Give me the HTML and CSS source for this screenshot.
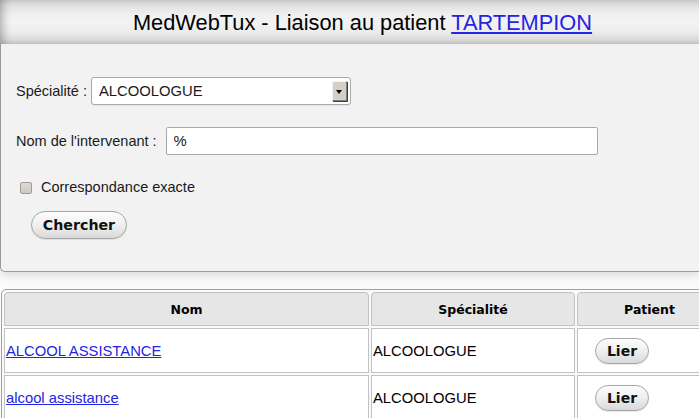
FILE: index.html
```html
<!DOCTYPE html>
<html lang="fr">
<head>
<meta charset="utf-8">
<title>MedWebTux - Liaison au patient</title>
<link rel="stylesheet" href="styles.css">
</head>
<body>
<header class="topbar">
  <h1 class="title">MedWebTux - Liaison au patient <a href="#" class="link">TARTEMPION</a></h1>
</header>
<section class="panel">
  <div class="row row-spec">
    <label class="label" for="spec">Spécialité :</label>
    <div class="select">
      <select id="spec" class="select-native"><option>ALCOOLOGUE</option></select>
      <span class="select-arrow"><span class="tri"></span></span>
    </div>
  </div>
  <div class="row row-nom">
    <label class="label" for="nom">Nom de l'intervenant :</label>
    <input id="nom" class="text-input" type="text" value="%">
  </div>
  <div class="row row-check">
    <input id="exact" class="check" type="checkbox">
    <label class="label" for="exact">Correspondance exacte</label>
  </div>
  <div class="row row-btn">
    <button class="btn btn-big" type="button">Chercher</button>
  </div>
</section>
<table class="results">
  <colgroup>
    <col class="c-nom">
    <col class="c-spec">
    <col class="c-pat">
  </colgroup>
  <thead>
    <tr><th>Nom</th><th>Spécialité</th><th>Patient</th></tr>
  </thead>
  <tbody>
    <tr>
      <td><a href="#" class="link">ALCOOL ASSISTANCE</a></td>
      <td>ALCOOLOGUE</td>
      <td class="cell-btn"><button class="btn btn-small" type="button">Lier</button></td>
    </tr>
    <tr>
      <td><a href="#" class="link">alcool assistance</a></td>
      <td>ALCOOLOGUE</td>
      <td class="cell-btn"><button class="btn btn-small" type="button">Lier</button></td>
    </tr>
  </tbody>
</table>
</body>
</html>
```
FILE: styles.css
```css
html, body {
  margin: 0;
  padding: 0;
  overflow: hidden;
}
body {
  background: #fbfbfb;
  font-family: "Liberation Sans", Arial, sans-serif;
  font-size: 14.5px;
  color: #1a1a1a;
  width: 699px;
  height: 418px;
}
.link {
  color: #2424e4;
  text-decoration: underline;
}
.topbar {
  height: 44px;
  background: linear-gradient(to bottom, #cdcdcd 0px, #e2e2e2 6px, #efefef 14px, #f3f3f3 22px, #ececec 32px, #dcdcdc 39px, #cacaca 44px);
  box-shadow: inset 8px 0 9px -5px rgba(0,0,0,0.28);
  display: flex;
  justify-content: center;
  align-items: center;
}
.title {
  margin: 0;
  font-family: "Liberation Sans", Arial, sans-serif;
  font-weight: normal;
  font-size: 21.8px;
  color: #000;
  padding-left: 26px;
  padding-top: 1px;
}
.panel {
  background: #f2f2f2;
  border-left: 1px solid #9a9a9a;
  border-bottom: 1px solid #9a9a9a;
  border-bottom-left-radius: 5px;
  box-shadow: 0 4px 8px rgba(0,0,0,0.12);
  padding: 33px 0 32px 15px;
  display: flex;
  flex-direction: column;
}
.row {
  display: flex;
  align-items: center;
}
.row-spec { height: 28px; gap: 4px; }
.row-nom { height: 28px; gap: 9px; margin-top: 22px; }
.row-check { height: 18px; margin-top: 23px; padding-left: 4px; gap: 9px; }
.row-btn { margin-top: 15px; padding-left: 15px; }
.label {
  font-size: 14.5px;
  color: #1a1a1a;
}
.select {
  width: 258px;
  height: 26px;
  border: 1px solid #a9a9a9;
  border-radius: 3px;
  background: #fff;
  display: flex;
  align-items: center;
  box-shadow: 0 1px 1px rgba(0,0,0,0.06);
}
.select-native {
  appearance: none;
  -webkit-appearance: none;
  border: 0;
  background: transparent;
  flex: 1;
  font-family: "Liberation Sans", Arial, sans-serif;
  font-size: 14.8px;
  color: #1a1a1a;
  padding: 0 0 0 7px;
  margin: 0;
  height: 24px;
  outline: none;
}
.select-arrow {
  width: 13px;
  height: 18px;
  margin-right: 3px;
  background: #d4d0c8;
  border-top: 1px solid #f4f4f4;
  border-left: 1px solid #f4f4f4;
  border-right: 1px solid #808080;
  border-bottom: 1px solid #808080;
  box-shadow: 1px 1px 0 #404040;
  display: flex;
  align-items: center;
  justify-content: center;
}
.tri {
  width: 0;
  height: 0;
  border-left: 3px solid transparent;
  border-right: 3px solid transparent;
  border-top: 4px solid #000;
  margin-top: 1px;
}
.text-input {
  flex: 0 0 auto;
  width: 423px;
  height: 26px;
  box-sizing: content-box;
  border: 1px solid #a9a9a9;
  border-radius: 2px;
  background: #fff;
  padding: 0 0 0 7px;
  margin: 0;
  font-family: "Liberation Sans", Arial, sans-serif;
  font-size: 14.8px;
  color: #1a1a1a;
}
.check {
  appearance: none;
  -webkit-appearance: none;
  width: 12px;
  height: 12px;
  margin: 1px 0 0 0;
  border: 1px solid #a09c98;
  border-radius: 2px;
  background: linear-gradient(#dedbd6, #ccc8c3);
  box-sizing: border-box;
}
.btn {
  font-family: "DejaVu Sans", Verdana, sans-serif;
  font-weight: bold;
  color: #111;
  border: 1px solid #a6a6a6;
  background: linear-gradient(to bottom, #fdfdfd 0%, #efefef 50%, #d9d9d9 100%);
  box-shadow: 0 1px 1px rgba(0,0,0,0.08);
  padding: 0;
  margin: 0;
  cursor: pointer;
}
.btn-big {
  width: 96px;
  height: 28px;
  border-radius: 14px;
  font-size: 14.2px;
}
.btn-small {
  width: 54px;
  height: 26px;
  border-radius: 13px;
  font-size: 14px;
}
.results {
  margin: 17px 0 0 1px;
  width: 722px;
  table-layout: fixed;
  border: 1px solid #a0a0a0;
  border-radius: 5px;
  border-spacing: 2px;
  background: #fafafa;
}
.c-nom { width: 365px; }
.c-spec { width: 204px; }
.c-pat { width: 145px; }
.results th {
  background: #e6e6e6;
  border: 1px solid #c2c2c2;
  border-radius: 4px 4px 0 0;
  font-family: "DejaVu Sans", Verdana, sans-serif;
  font-weight: bold;
  font-size: 12.5px;
  color: #000;
  padding: 0;
  box-sizing: border-box;
}
.results thead th { height: 34px; }
.results td {
  height: 45px;
  box-sizing: border-box;
  background: #fff;
  border: 1px solid #c2c2c2;
  padding: 0 0 0 1px;
  font-size: 14.8px;
  color: #000;
  white-space: nowrap;
  overflow: hidden;
}
.results td.cell-btn {
  padding-left: 17px;
}
```
